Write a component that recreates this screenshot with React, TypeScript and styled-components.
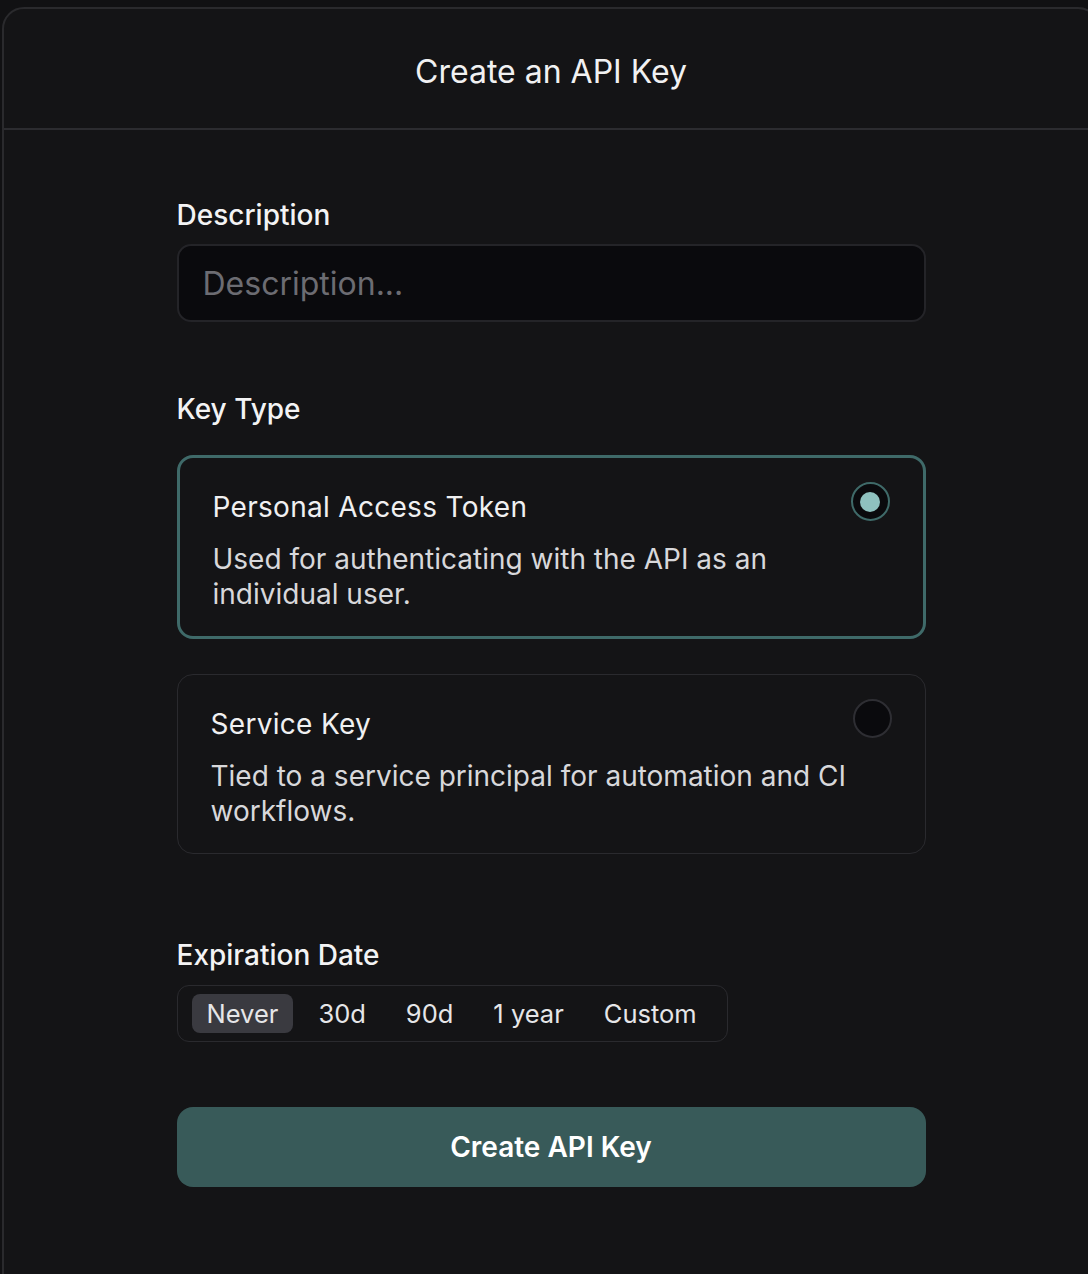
import { useState } from 'react'
import styled, { createGlobalStyle } from 'styled-components'

const GlobalStyle = createGlobalStyle`
  html, body {
    margin: 0;
    padding: 0;
    background: #111113;
    overflow: hidden;
  }
  body {
    font-family: Inter, "Noto Sans", sans-serif;
    color: #ededee;
  }
`

const keyTypes = [
  {
    id: 'pat',
    title: 'Personal Access Token',
    text: 'Used for authenticating with the API as an individual user.',
  },
  {
    id: 'service',
    title: 'Service Key',
    text: 'Tied to a service principal for automation and CI workflows.',
  },
]

const expirations = ['Never', '30d', '90d', '1 year', 'Custom']

const App = () => {
  const [keyType, setKeyType] = useState('pat')
  const [expiry, setExpiry] = useState('Never')

  return (
    <>
      <GlobalStyle />
      <Panel>
        <Header>Create an API Key</Header>
        <Body>
          <Form>
            <Field gap={71}>
              <Label>Description</Label>
              <Input placeholder="Description..." />
            </Field>

            <Field gap={85}>
              <Label>Key Type</Label>
              <CardList>
                {keyTypes.map((k) => (
                  <OptionCard
                    key={k.id}
                    selected={keyType === k.id}
                    onClick={() => setKeyType(k.id)}
                  >
                    <OptionTitle>{k.title}</OptionTitle>
                    <OptionDesc>{k.text}</OptionDesc>
                    <Radio selected={keyType === k.id}>
                      {keyType === k.id && <RadioDot />}
                    </Radio>
                  </OptionCard>
                ))}
              </CardList>
            </Field>

            <Field gap={65}>
              <Label>Expiration Date</Label>
              <Segmented>
                {expirations.map((e) => (
                  <Segment
                    key={e}
                    active={expiry === e}
                    onClick={() => setExpiry(e)}
                  >
                    {e}
                  </Segment>
                ))}
              </Segmented>
            </Field>

            <SubmitButton>Create API Key</SubmitButton>
          </Form>
        </Body>
      </Panel>
    </>
  )
}

const Panel = styled.div`
  margin: 7px 0 0 2px;
  width: 1098px;
  min-height: 1300px;
  background: #141416;
  border: 2px solid #2a2a2d;
  border-radius: 22px;
  box-sizing: border-box;
`

const Header = styled.div`
  height: 121px;
  box-sizing: border-box;
  padding-top: 5px;
  display: flex;
  align-items: center;
  justify-content: center;
  font-size: 32px;
  font-weight: 400;
  color: #f1f1f2;
  border-bottom: 2px solid #2c2c30;
`

const Body = styled.div`
  padding: 69px 0 60px;
`

const Form = styled.div`
  width: 749px;
  margin: 0 auto;
  display: flex;
  flex-direction: column;
`

const Field = styled.div<{ gap: number }>`
  display: flex;
  flex-direction: column;
  margin-bottom: ${(p) => p.gap}px;
`

const Label = styled.div`
  font-size: 28px;
  line-height: 32px;
  font-weight: 500;
  color: #f3f3f4;
  margin-bottom: 13px;
`

const Input = styled.input`
  height: 78px;
  box-sizing: border-box;
  background: #0a0a0d;
  border: 2px solid #242428;
  border-radius: 14px;
  padding: 0 24px;
  font-family: Inter, sans-serif;
  font-size: 32px;
  color: #ededee;
  outline: none;
  &::placeholder {
    color: #6c6c72;
  }
`

const CardList = styled.div`
  display: flex;
  flex-direction: column;
  gap: 35px;
  margin-top: 17px;
`

const OptionCard = styled.div<{ selected: boolean }>`
  position: relative;
  display: flex;
  flex-direction: column;
  gap: 18px;
  padding: 32px 33px 24px;
  border: ${(p) => (p.selected ? '3px solid #3f6a69' : '1px solid #2a2a2e')};
  border-radius: 16px;
  cursor: pointer;
`

const OptionTitle = styled.div`
  font-size: 28px;
  line-height: 34px;
  font-weight: 400;
  letter-spacing: 0.3px;
  color: #f0f0f1;
`

const OptionDesc = styled.div`
  font-size: 28px;
  line-height: 35px;
  color: #d8d8db;
  max-width: 660px;
`

const Radio = styled.div<{ selected: boolean }>`
  position: absolute;
  top: 24px;
  right: 33px;
  width: 39px;
  height: 39px;
  box-sizing: border-box;
  border-radius: 50%;
  background: #0a0a0d;
  border: 2px solid ${(p) => (p.selected ? '#3f6a69' : '#2e2e33')};
  display: flex;
  align-items: center;
  justify-content: center;
`

const RadioDot = styled.div`
  width: 20px;
  height: 20px;
  border-radius: 50%;
  background: #8fc1bf;
`

const Segmented = styled.div`
  align-self: flex-start;
  margin-top: 1px;
  display: flex;
  align-items: center;
  gap: 10px;
  padding: 8px 15px 8px 14px;
  border: 1px solid #2a2a2e;
  border-radius: 12px;
`

const Segment = styled.div<{ active: boolean }>`
  padding: 0 15px;
  height: 39px;
  display: flex;
  align-items: center;
  font-size: 25.5px;
  color: #e6e6e8;
  background: ${(p) => (p.active ? '#3a3a40' : 'transparent')};
  border-radius: 8px;
  cursor: pointer;
`

const SubmitButton = styled.button`
  height: 80px;
  border: none;
  border-radius: 16px;
  background: #385a59;
  color: #ffffff;
  font-family: Inter, sans-serif;
  font-size: 28px;
  font-weight: 600;
  cursor: pointer;
`

export default App
